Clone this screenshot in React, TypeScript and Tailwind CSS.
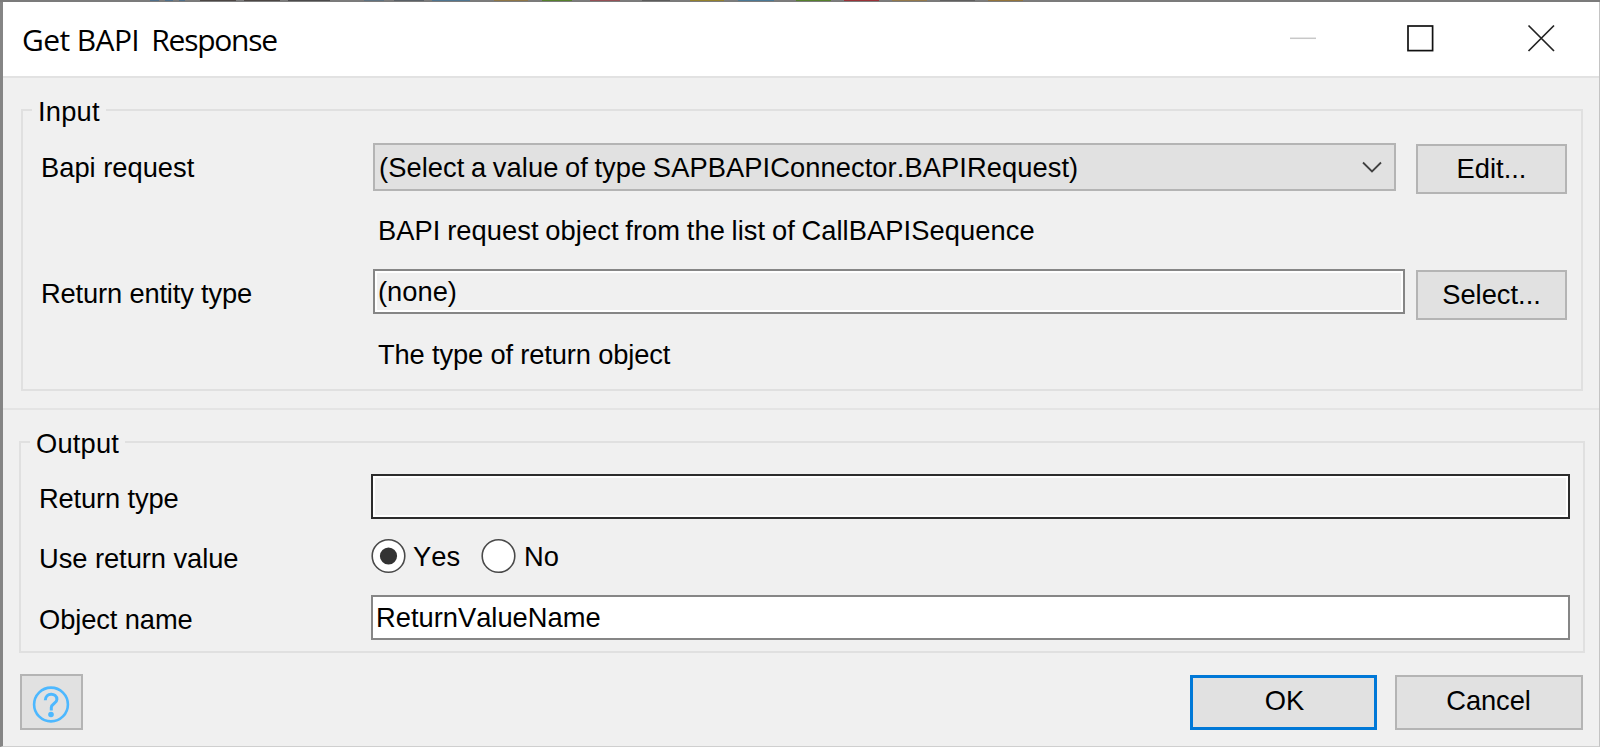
import type { ReactNode } from "react";

type BoxProps = { className?: string; children?: ReactNode };

const strip: [number, string][] = [
  [150, "bg-[#7b7b7b]"],
  [9, "bg-[#4f6f8a]"],
  [6, "bg-[#7b7b7b]"],
  [8, "bg-[#4f6f8a]"],
  [6, "bg-[#7b7b7b]"],
  [6, "bg-[#4f6f8a]"],
  [15, "bg-[#7b7b7b]"],
  [36, "bg-[#4c4644]"],
  [8, "bg-[#7b7b7b]"],
  [36, "bg-[#4c4644]"],
  [8, "bg-[#7b7b7b]"],
  [42, "bg-[#4c4a4c]"],
  [34, "bg-[#7b7b7b]"],
  [20, "bg-[#5f7281]"],
  [10, "bg-[#7b7b7b]"],
  [30, "bg-[#5a6066]"],
  [8, "bg-[#7b7b7b]"],
  [38, "bg-[#4f7590]"],
  [24, "bg-[#7b7b7b]"],
  [34, "bg-[#8f7646]"],
  [14, "bg-[#7b7b7b]"],
  [30, "bg-[#55802c]"],
  [18, "bg-[#7b7b7b]"],
  [30, "bg-[#955055]"],
  [22, "bg-[#7b7b7b]"],
  [28, "bg-[#5c5c5c]"],
  [20, "bg-[#7b7b7b]"],
  [34, "bg-[#94812c]"],
  [14, "bg-[#7b7b7b]"],
  [36, "bg-[#4a7895]"],
  [22, "bg-[#7b7b7b]"],
  [35, "bg-[#55802c]"],
  [13, "bg-[#7b7b7b]"],
  [35, "bg-[#9a3238]"],
  [13, "bg-[#7b7b7b]"],
  [35, "bg-[#94794a]"],
  [13, "bg-[#7b7b7b]"],
  [35, "bg-[#5f5f5f]"],
  [13, "bg-[#7b7b7b]"],
  [35, "bg-[#94743a]"],
];

function Button({ className = "", children }: BoxProps) {
  return (
    <button
      className={`flex items-start justify-center bg-[#e1e1e1] leading-[32px] ${className}`}
    >
      {children}
    </button>
  );
}

function Label({ className = "", children }: BoxProps) {
  return (
    <span className={`w-[332px] shrink-0 whitespace-nowrap ${className}`}>{children}</span>
  );
}

function Radio({ checked = false }: { checked?: boolean }) {
  return (
    <svg width="36" height="36" viewBox="0 0 36 36" className="shrink-0">
      <circle cx="17.5" cy="18" r="16.3" fill="#fff" stroke="#4a4a4a" strokeWidth="1.6" />
      {checked && <circle cx="17.5" cy="18" r="8.6" fill="#333" />}
    </svg>
  );
}

export default function App() {
  return (
    <div className="flex h-[747px] w-[1600px] flex-col overflow-hidden bg-[#f0f0f0] font-['Liberation_Sans',Arial,sans-serif] text-[27.3px] leading-[32px] text-black [font-kerning:none]">
      <div className="flex h-[2px] shrink-0 bg-[#7b7b7b]">
        {strip.map(([width, color], i) => (
          <i key={i} className={`h-[1px] ${color}`} style={{ width }} />
        ))}
      </div>
      <div className="flex h-[745px] flex-col border-r border-b border-l-[3px] border-r-[#c4c4c4] border-b-[#cfcfcf] border-l-[#858585]">
        <header className="flex h-[76px] shrink-0 items-start border-b-2 border-[#e2e2e2] bg-white">
          <h1 className="mt-[18px] ml-[19px] font-['Open_Sans',sans-serif] text-[30px] leading-[40px] tracking-[-0.6px] whitespace-nowrap">
            Get BAPI <span className="ml-[5px] tracking-[-1.25px]">Response</span>
          </h1>
          <svg className="mt-[20px] mr-[44px] ml-auto" width="270" height="34" viewBox="0 0 270 34" fill="none">
            <path d="M5 16.3H31" stroke="#c8c8c8" strokeWidth="1.5" />
            <rect x="123" y="4" width="24.6" height="24.6" stroke="#111" strokeWidth="1.7" />
            <path d="M243.500 3.500L269 29M269 3.500L243.500 29" stroke="#222" strokeWidth="1.7" />
          </svg>
        </header>

        <section className="flex h-[332px] shrink-0 flex-col border-b-2 border-[#e4e4e4]">
          <fieldset className="mt-[13px] ml-[18px] flex h-[300px] w-[1562px] flex-col border-2 border-[#e0e0e0]">
            <legend className="ml-[9px] h-[37px] px-[6px] pt-[5px] tracking-[0.2px]">Input</legend>
            <div className="flex h-[61px] items-start pt-[15px] pl-[18px]">
              <Label className="mt-[9px]">Bapi request</Label>
              <div className="flex h-[48px] w-[1023px] items-start border-2 border-[#b4b4b4] bg-[#e1e1e1] pt-[7px] pl-[4px] tracking-[0.07px] [word-spacing:-1.1px] whitespace-nowrap">
                (Select a value of type SAPBAPIConnector.BAPIRequest)
                <svg className="mt-[8px] mr-[11px] ml-auto" width="22" height="14" viewBox="0 0 22 14" fill="none">
                  <path d="M2 2.500L11 11.500L20 2.500" stroke="#404040" strokeWidth="1.8" />
                </svg>
              </div>
              <Button className="mt-[1px] ml-[20px] h-[50px] w-[151px] border-2 border-[#b4b4b4] pt-[7px]">Edit...</Button>
            </div>
            <p className="mt-[26px] ml-[355px] tracking-[0.07px] [word-spacing:-1px]">BAPI request object from the list of CallBAPISequence</p>
            <div className="mt-[22px] flex h-[52px] items-start pl-[18px]">
              <Label className="mt-[9px] tracking-[-0.16px]">Return entity type</Label>
              <div className="h-[45px] w-[1032px] border-2 border-[#868686] pt-[5px] pl-[3px] inset-ring-2 inset-ring-white">
                (none)
              </div>
              <Button className="mt-[1px] ml-[11px] h-[50px] w-[151px] border-2 border-[#b4b4b4] pt-[7px]">Select...</Button>
            </div>
            <p className="mt-[18px] ml-[355px] tracking-[-0.15px]">The type of return object</p>
          </fieldset>
        </section>

        <section className="flex shrink-0 flex-col">
          <fieldset className="mt-[13px] ml-[16px] flex h-[230px] w-[1566px] flex-col border-2 border-[#e0e0e0]">
            <legend className="ml-[9px] h-[37px] px-[6px] pt-[5px] tracking-[0.2px]">Output</legend>
            <div className="flex h-[60px] items-start pt-[14px] pl-[18px]">
              <Label className="mt-[9px] tracking-[-0.15px]">Return type</Label>
              <div className="h-[45px] w-[1199px] border-2 border-[#2c2c2c] inset-ring-2 inset-ring-white" />
            </div>
            <div className="mt-[18px] flex h-[36px] items-start pl-[18px]">
              <Label className="mt-[5px] tracking-[-0.05px]">Use return value</Label>
              <Radio checked />
              <span className="mt-[3px] ml-[6px] w-[68px]">Yes</span>
              <Radio />
              <span className="mt-[3px] ml-[7px]">No</span>
            </div>
            <div className="mt-[21px] flex items-start pl-[18px]">
              <Label className="mt-[9px] tracking-[-0.1px]">Object name</Label>
              <div className="h-[45px] w-[1199px] border-2 border-[#868686] bg-white pt-[5px] pl-[3px]">ReturnValueName</div>
            </div>
          </fieldset>
        </section>

        <footer className="mt-[21px] flex items-start pl-[17px]">
          <Button className="h-[56px] w-[63px] border-2 border-[#b4b4b4] pt-[10px]">
            <svg width="40" height="40" viewBox="0 0 40 40" fill="none" stroke="#4db8ff" strokeWidth="2.600" className="shrink-0">
              <circle cx="19" cy="18.500" r="16.900" />
              <path d="M13.300 14.300C13.300 6.300 24.900 6.300 24.900 13.500C24.900 17.500 19.300 17.500 19.300 21.500V24.500" strokeWidth="3" />
              <circle cx="19" cy="28.500" r="2.800" fill="#4db8ff" stroke="none" />
            </svg>
          </Button>
          <Button className="mt-[1px] ml-auto h-[55px] w-[187px] border-[3px] border-[#0078d7] pt-[7px] pl-[2px]">OK</Button>
          <Button className="mt-[1px] mr-[16px] ml-[18px] h-[55px] w-[188px] border-2 border-[#b4b4b4] pt-[8px] pr-[1px] tracking-[-0.1px]">Cancel</Button>
        </footer>
      </div>
    </div>
  );
}
